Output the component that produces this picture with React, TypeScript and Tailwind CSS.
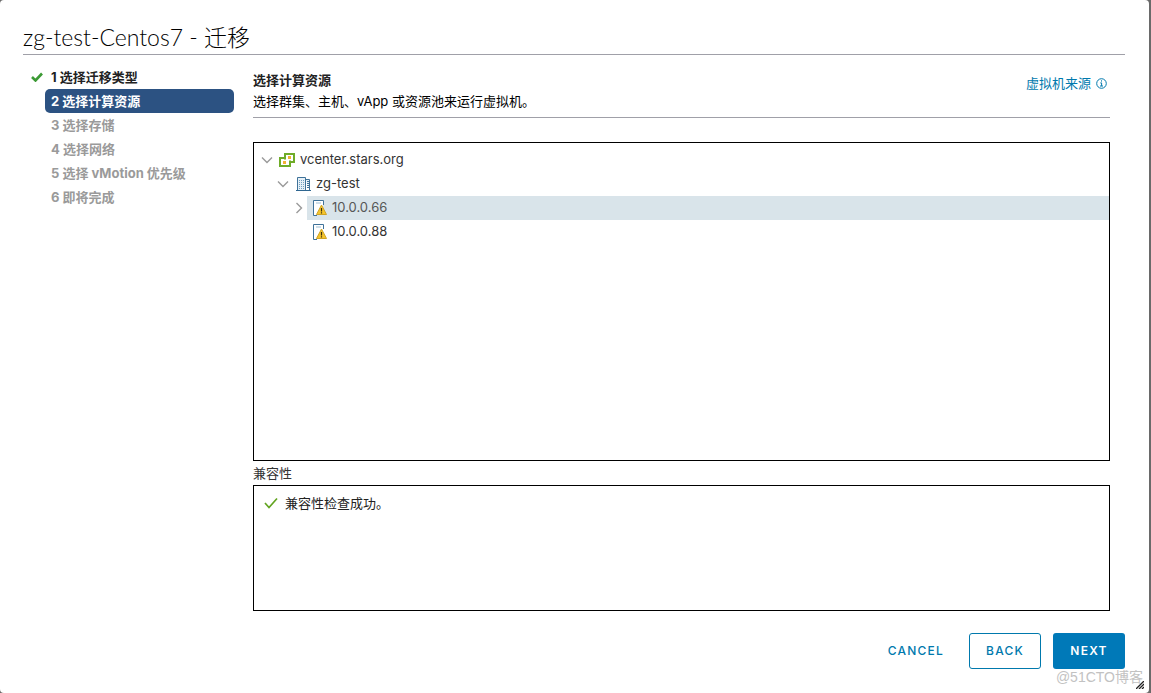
import React from 'react';

interface TreeNode {
  label: string;
  level: number;
  kind: 'vcenter' | 'datacenter' | 'host';
  expander?: 'open' | 'closed';
  selected?: boolean;
}

const steps = [
  '选择迁移类型',
  '选择计算资源',
  '选择存储',
  '选择网络',
  '选择 vMotion 优先级',
  '即将完成',
];

const currentStep = 1;

const nodes: TreeNode[] = [
  { label: 'vcenter.stars.org', level: 0, kind: 'vcenter', expander: 'open' },
  { label: 'zg-test', level: 1, kind: 'datacenter', expander: 'open' },
  { label: '10.0.0.66', level: 2, kind: 'host', expander: 'closed', selected: true },
  { label: '10.0.0.88', level: 2, kind: 'host' },
];

const indents = ['pl-1', 'pl-5', 'pl-9'];

const VCenterIcon = () => (
  <svg width="16" height="16" viewBox="0 0 16 16" fill="none" className="shrink-0">
    <path d="M6 2h9v8h-4v4H1V6h5z" fill="#fff" stroke="#6fac28" strokeWidth="2" />
    <path d="M6 6v1.500M11 10V8.500" stroke="#6fac28" strokeWidth="2" />
    <rect x="9" y="4" width="3" height="3" fill="#f2b233" />
    <rect x="4" y="9" width="3" height="3" fill="#f2b233" />
  </svg>
);

const DatacenterIcon = () => (
  <svg width="16" height="16" viewBox="0 0 16 16" fill="none" className="shrink-0">
    <path d="M2.500 14V1.500h8V14M10.500 3.500h4V14" fill="#e6f0f7" stroke="#3f7299" />
    <path d="M1 14.500h15" stroke="#2f6690" />
    <path d="M4.500 4v9M6.500 4v9M8.500 4v9" stroke="#6f9fc0" strokeDasharray="1 1" />
    <path d="M12 5.500h2M12 7.500h2M12 9.500h2M12 11.500h2" stroke="#3f7299" />
  </svg>
);

const HostIcon = () => (
  <svg width="16" height="16" viewBox="0 0 16 16" fill="none" className="shrink-0">
    <path d="M3 15V1h9v14z" fill="#fff" />
    <path d="M6 15.500H2.500v-15h10V5" stroke="#3f7299" />
    <path d="M5 3h5" stroke="#9dbdd2" />
    <path d="M10.500 5l5 9.500h-10z" fill="#f6c52c" stroke="#cfa324" strokeLinejoin="round" />
    <path d="M10.500 8v3.500M10.500 12.300v1.300" stroke="#3a3010" strokeWidth="1.200" />
  </svg>
);

const Chevron: React.FC<{ open: boolean }> = ({ open }) => (
  <svg width="12" height="12" viewBox="0 0 12 12" fill="none" stroke="#9a9a9a" strokeWidth="1.400">
    <path d={open ? 'M1 3.500l5 5 5-5' : 'M3.500 1l5 5-5 5'} />
  </svg>
);

const nodeIcons = {
  vcenter: <VCenterIcon />,
  datacenter: <DatacenterIcon />,
  host: <HostIcon />,
};

const TreeRow: React.FC<{ node: TreeNode }> = ({ node }) => (
  <li role="treeitem" aria-selected={!!node.selected} className={`flex h-6 ${indents[node.level]}`}>
    <span className="flex w-[17px] shrink-0 items-center justify-center">
      {node.expander && (
        <button type="button" aria-label={node.label} aria-expanded={node.expander === 'open'}>
          <Chevron open={node.expander === 'open'} />
        </button>
      )}
    </span>
    <button
      type="button"
      className={`flex flex-1 items-center gap-[5px] pl-1 text-left ${
        node.selected ? 'bg-[#d9e4ea] text-[#565656]' : 'text-[#333333]'
      }`}
    >
      {nodeIcons[node.kind]}
      {node.label}
    </button>
  </li>
);

const App: React.FC = () => {
  return (
    <div className="flex min-h-screen bg-[#6a6a6a] pr-[2px] font-['Inter','Noto_Sans_CJK_SC',sans-serif] text-[13px] text-black">
      <div className="relative flex flex-1 flex-col rounded-[4px] bg-white pr-[24px] pb-6 pl-[23px]">
        <h1 className="border-b border-[#a0a0a8] pt-5 font-['Lato','Noto_Sans_CJK_SC',sans-serif] text-[23px] leading-[34px] font-light">
          zg-test-Centos7 - 迁移
        </h1>

        <div className="flex flex-1">
          <nav className="w-[211px] shrink-0 pt-[10px]">
            <ol>
              {steps.map((step, i) => (
                <li key={step} className="flex h-6 items-center">
                  <span className="flex w-[22px] shrink-0 justify-center pr-[2px] pl-2">
                    {i < currentStep && (
                      <svg width="12" height="10" viewBox="0 0 12 10" fill="none" className="shrink-0">
                        <path d="M1 5l3.500 3.500L11 1.500" stroke="#3c9a35" strokeWidth="2.600" />
                      </svg>
                    )}
                  </span>
                  <button
                    type="button"
                    className={`h-6 flex-1 rounded-[5px] px-[6px] pt-[2px] text-left font-bold ${
                      i === currentStep
                        ? 'bg-[#2c5282] text-white'
                        : i < currentStep
                          ? 'text-[#222222]'
                          : 'text-[#9a9a9a]'
                    }`}
                  >
                    {i + 1} {step}
                  </button>
                </li>
              ))}
            </ol>
          </nav>

          <main className="flex flex-1 flex-col pt-[15px] pr-[15px] pl-[19px]">
            <header className="flex justify-between border-b border-[#a0a0a8] pb-[5px] leading-[21px]">
              <div>
                <h2 className="font-bold text-[#222222]">选择计算资源</h2>
                <p>选择群集、主机、vApp 或资源池来运行虚拟机。</p>
              </div>
              <a href="#" className="flex h-[26px] items-center gap-[5px] pr-[3px] text-[#0079ad]">
                虚拟机来源
                <svg width="11" height="11" viewBox="0 0 11 11" fill="none" stroke="currentColor">
                  <circle cx="5.500" cy="5.500" r="4.800" />
                  <path d="M5.500 2.300v1.300M4.300 4.900h1.300v3M4 8h3" />
                </svg>
              </a>
            </header>

            <ul role="tree" className="mt-6 flex-1 border border-black pt-[5px]">
              {nodes.map((node) => (
                <TreeRow key={node.label} node={node} />
              ))}
            </ul>

            <h3 className="leading-6 text-[#333333]">兼容性</h3>
            <div className="h-[126px] border border-black px-[10px] pt-[7px]">
              <p className="flex items-center gap-[7px] leading-5 text-[#222222]">
                <svg width="14" height="12" viewBox="0 0 14 12" fill="none">
                  <path d="M1 6l4 4.500L13 1.500" stroke="#62a420" strokeWidth="1.700" />
                </svg>
                兼容性检查成功。
              </p>
            </div>
          </main>
        </div>

        <footer className="flex justify-end gap-3 pt-[22px] text-[12px] font-medium tracking-widest">
          <button type="button" className="h-9 px-[13px] text-[#0079ad]">
            CANCEL
          </button>
          <button type="button" className="h-9 w-[72px] rounded-[3px] border border-[#0079ad] text-[#0079ad]">
            BACK
          </button>
          <button type="button" className="h-9 w-[72px] rounded-[3px] bg-[#0079b8] font-semibold text-white">
            NEXT
          </button>
        </footer>

        <span className="pointer-events-none absolute right-[6px] bottom-[6px] font-['Liberation_Sans','Noto_Sans_CJK_SC',sans-serif] text-[14px] leading-5 text-[#c2c2c2]">
          @51CTO博客
        </span>
        <svg width="8" height="8" viewBox="0 0 8 8" className="absolute right-[5px] bottom-[4px]">
          <path d="M0 8L8 0M3 8l5-5M6 8l2-2" stroke="#222222" strokeWidth="1.300" />
        </svg>
      </div>
    </div>
  );
};

export default App;
